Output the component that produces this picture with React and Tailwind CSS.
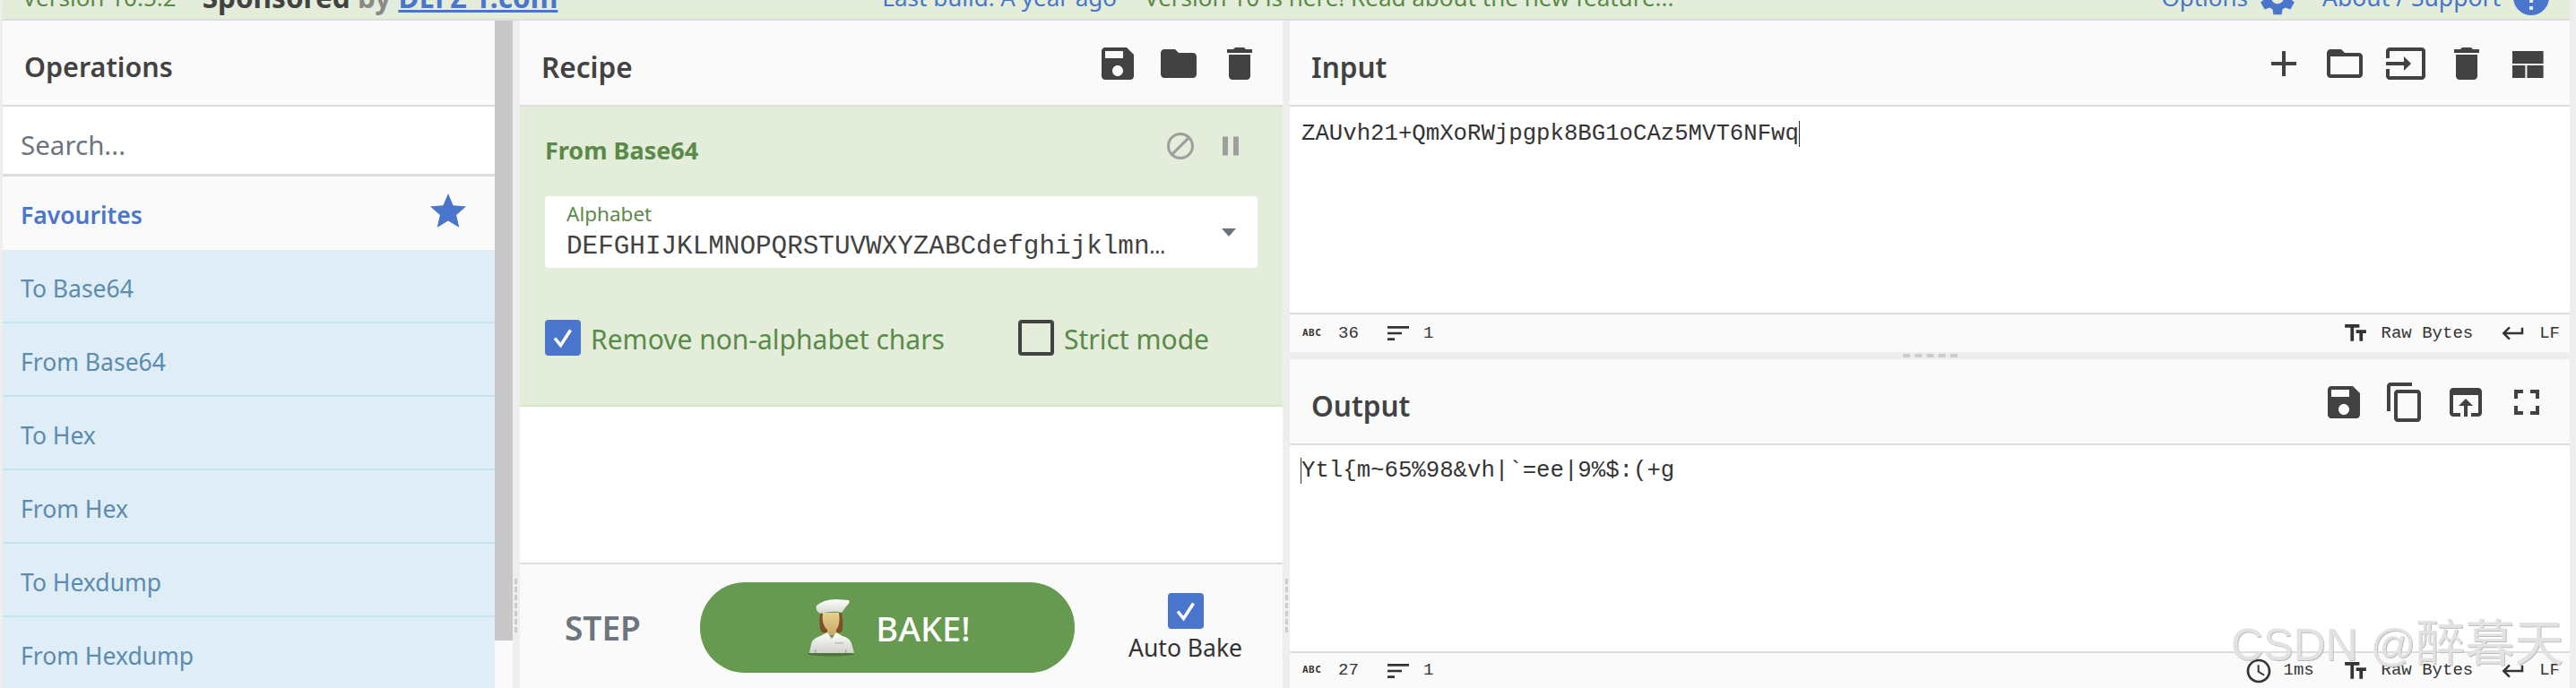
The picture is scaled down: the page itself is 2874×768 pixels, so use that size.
const P = {
  save: "M17 3H5c-1.11 0-2 .9-2 2v14c0 1.1.89 2 2 2h14c1.1 0 2-.9 2-2V7l-4-4zm-5 16c-1.66 0-3-1.34-3-3s1.34-3 3-3 3 1.34 3 3-1.34 3-3 3zm3-10H5V5h10v4z",
  folder: "M10 4H4c-1.1 0-1.99.9-1.99 2L2 18c0 1.1.9 2 2 2h16c1.1 0 2-.9 2-2V8c0-1.1-.9-2-2-2h-8l-2-2z",
  del: "M6 19c0 1.1.9 2 2 2h8c1.1 0 2-.9 2-2V7H6v12zM19 4h-3.5l-1-1h-5l-1 1H5v2h14V4z",
  add: "M19 13h-6v6h-2v-6H5v-2h6V5h2v6h6v2z",
  open: "M20 6h-8l-2-2H4c-1.1 0-1.99.9-1.99 2L2 18c0 1.1.9 2 2 2h16c1.1 0 2-.9 2-2V8c0-1.1-.9-2-2-2zm0 12H4V8h16v10z",
  input: "M21 3.01H3c-1.1 0-2 .9-2 2V9h2V4.99h18v14.03H3V15H1v4.01c0 1.1.9 1.98 2 1.98h18c1.1 0 2-.88 2-1.98v-14c0-1.11-.9-2-2-2zM11 16l4-4-4-4v3H1v2h10v3z",
  layout: "M3.5 5h17.3v7H3.500zM3.500 13h7.200v7H3.500zM11.700 13h9.100v7h-9.100z",
  copy: "M16 1H4c-1.1 0-2 .9-2 2v14h2V3h12V1zm3 4H8c-1.1 0-2 .9-2 2v14c0 1.1.9 2 2 2h11c1.1 0 2-.9 2-2V7c0-1.1-.9-2-2-2zm0 16H8V7h11v14z",
  browser: "M19 4H5c-1.11 0-2 .9-2 2v12c0 1.1.89 2 2 2h4v-2H5V8h14v10h-4v2h4c1.1 0 2-.9 2-2V6c0-1.1-.89-2-2-2zm-7 6l-4 4h3v6h2v-6h3l-4-4z",
  full: "M7 14H5v5h5v-2H7v-3zm-2-4h2V7h3V5H5v5zm12 7h-3v2h5v-5h-2v3zM14 5v2h3v3h2V5h-5z",
  block: "M12 2C6.48 2 2 6.48 2 12s4.48 10 10 10 10-4.48 10-10S17.52 2 12 2zM4 12c0-4.42 3.58-8 8-8 1.85 0 3.55.63 4.9 1.69L5.69 16.9C4.63 15.55 4 13.85 4 12zm8 8c-1.85 0-3.55-.63-4.9-1.69L18.31 7.1C19.37 8.45 20 10.15 20 12c0 4.42-3.58 8-8 8z",
  pause: "M6 19h4V5H6v14zm8-14v14h4V5h-4z",
  star: "M12 17.27L18.18 21l-1.64-6.97L22 9.24l-7.19-.61L12 2 9.19 8.63 2 9.24l5.46 4.73L5.82 21z",
  gear: "M19.14 12.94c.04-.3.06-.61.06-.94 0-.32-.02-.64-.07-.94l2.03-1.58c.18-.14.23-.41.12-.61l-1.92-3.32c-.12-.22-.37-.29-.59-.22l-2.39.96c-.5-.38-1.03-.7-1.62-.94l-.36-2.54c-.04-.24-.24-.41-.48-.41h-3.84c-.24 0-.43.17-.47.41l-.36 2.54c-.59.24-1.13.57-1.62.94l-2.39-.96c-.22-.08-.47 0-.59.22L2.74 8.87c-.12.21-.08.47.12.61l2.03 1.58c-.05.3-.09.63-.09.94s.02.64.07.94l-2.03 1.58c-.18.14-.23.41-.12.61l1.92 3.32c.12.22.37.29.59.22l2.39-.96c.5.38 1.03.7 1.62.94l.36 2.54c.05.24.24.41.48.41h3.84c.24 0 .44-.17.47-.41l.36-2.54c.59-.24 1.13-.56 1.62-.94l2.39.96c.22.08.47 0 .59-.22l1.92-3.32c.12-.22.07-.47-.12-.61l-2.01-1.58zM12 15.6c-1.98 0-3.6-1.62-3.6-3.6s1.62-3.6 3.6-3.6 3.6 1.62 3.6 3.6-1.62 3.6-3.6 3.6z",
  help: "M12 2C6.48 2 2 6.48 2 12s4.48 10 10 10 10-4.48 10-10S17.52 2 12 2zm1 17h-2v-2h2v2zm2.07-7.75l-.9.92C13.45 12.9 13 13.5 13 15h-2v-.5c0-1.1.45-2.1 1.17-2.83l1.24-1.26c.37-.36.59-.86.59-1.41 0-1.1-.9-2-2-2s-2 .9-2 2H8c0-2.21 1.79-4 4-4s4 1.79 4 4c0 .88-.36 1.68-.93 2.25z",
  tt: "M2.5 4v3h5v12h3V7h5V4h-13zm19 5h-9v3h3v7h3v-7h3V9z",
  ret: "M19 7v4H5.83l3.58-3.59L8 6l-6 6 6 6 1.41-1.41L5.83 13H21V7z",
  sort: "M3 18h6v-2H3v2zM3 6v2h18V6H3zm0 7h12v-2H3v2z",
  clock: "M11.99 2C6.47 2 2 6.48 2 12s4.47 10 9.99 10C17.52 22 22 17.52 22 12S17.52 2 11.99 2zM12 20c-4.42 0-8-3.58-8-8s3.58-8 8-8 8 3.58 8 8-3.58 8-8 8zm.5-13H11v6l5.25 3.15.75-1.23-4.5-2.67z",
};

function Icon({ d, className = "" }) {
  return (
    <svg viewBox="0 0 24 24" fill="currentColor" className={"shrink-0 " + className}>
      <path d={d} />
    </svg>
  );
}

function Tool({ d }) {
  return <Icon d={d} className="w-[48px] h-[48px] text-[#424242]" />;
}

function Check({ className = "" }) {
  return (
    <span className={"flex items-center justify-center w-[40px] h-[40px] rounded-[4px] bg-[#4a75cc] shrink-0 " + className}>
      <svg viewBox="0 0 40 40" className="w-[40px] h-[40px]">
        <path d="M11 20.500l6.500 8 11-17" fill="none" stroke="#fff" strokeWidth="3.500" />
      </svg>
    </span>
  );
}

function Chef() {
  return (
    <svg viewBox="0 0 60 67" className="w-[60px] h-[67px] shrink-0">
      <defs>
        <linearGradient id="coat" x1="0" y1="0" x2="0" y2="1">
          <stop offset="0" stopColor="#ffffff" />
          <stop offset="1" stopColor="#cfd1cc" />
        </linearGradient>
        <linearGradient id="face" x1="0" y1="0" x2="0" y2="1">
          <stop offset="0" stopColor="#e8d190" />
          <stop offset="1" stopColor="#c9a868" />
        </linearGradient>
        <linearGradient id="hat" x1="0" y1="0" x2="0" y2="1">
          <stop offset="0" stopColor="#ffffff" />
          <stop offset="1" stopColor="#d4d4cf" />
        </linearGradient>
      </defs>
      <ellipse cx="30" cy="63" rx="26" ry="2.500" fill="#3f6a30" opacity="0.7" />
      <path d="M18 17 Q16 38 21 39 L41 39 Q45 36 42 17 Z" fill="#7d4f22" />
      <path d="M21 17 Q19 30 26 36 L26 42 L36 42 L36 36 Q41 30 39 17 Z" fill="url(#face)" />
      <path d="M26 39 L18 43 Q9 46 8 52 L6 62 L56 62 L53 51 Q51 45 43 43 L36 39 L31 46 Z" fill="url(#coat)" />
      <rect x="34" y="50" width="10" height="1.500" fill="#b9bbb5" />
      <rect x="12" y="58" width="1.500" height="4" fill="#a9aba6" />
      <rect x="46" y="58" width="1.500" height="4" fill="#a9aba6" />
      <path d="M14 9 Q22 2 36 2 L50 3 Q52 6 47 10 L42 17 Q34 14 18 18 Q12 14 14 9 Z" fill="url(#hat)" />
    </svg>
  );
}

function PanelHeader({ title, children, className = "" }) {
  return (
    <div className={"h-[96px] shrink-0 flex items-center justify-between bg-[#fafafa] border-b-2 border-[#ddd] " + className}>
      <span className="text-[31.5px] font-semibold text-[#424242] leading-none mt-[9px] ml-[24px]">{title}</span>
      <div className="flex items-center gap-[20px] mt-[2px]">{children}</div>
    </div>
  );
}

function StatusBar({ chars, time }) {
  return (
    <div className="flex-1 flex items-center justify-between bg-[#fafafa] font-['Liberation_Mono',monospace] text-[19px] text-[#333]">
      <div className="flex items-center ml-[14px]">
        <span className="w-[24px] text-[11px] font-bold tracking-[0.5px] font-['DejaVu_Sans_Mono',monospace]">ABC</span>
        <span className="ml-[16px] w-[23px]">{chars}</span>
        <Icon d={P.sort} className="w-[32px] h-[32px] ml-[28px] -mr-[4px] text-[#333]" />
        <span className="ml-[16px]">1</span>
      </div>
      <div className="flex items-center mr-[11px]">
        {time && <Icon d={P.clock} className="w-[32px] h-[32px] text-[#333] mr-[12px]" />}
        {time && <span className="mr-[29px] w-[36px]">1ms</span>}
        <Icon d={P.tt} className="w-[30px] h-[30px] text-[#333]" />
        <span className="ml-[14px]">Raw Bytes</span>
        <Icon d={P.ret} className="w-[30px] h-[30px] ml-[30px] text-[#333]" />
        <span className="ml-[14px]">LF</span>
      </div>
    </div>
  );
}

const ops = ["To Base64", "From Base64", "To Hex", "From Hex", "To Hexdump", "From Hexdump"];

export default function App() {
  return (
    <div className="relative w-[2874px] h-[768px] overflow-hidden flex flex-col bg-[#eee] font-['Noto_Sans',sans-serif]">
      {/* top banner, cut off by the window */}
      <div className="h-[23px] w-[2865px] ml-[2px] shrink-0 bg-[#e3edd9] border-b-2 border-[#ddd] flex items-end overflow-hidden text-[26px] leading-[28px] pb-[10px]">
        <span className="ml-[23px] text-[#5a8a4a] whitespace-nowrap">Version 10.5.2</span>
        <span className="ml-[29px] text-[31.500px] leading-[28px] font-bold text-[#424242] whitespace-nowrap">
          Sponsored <span className="text-[#8a8a8a]">by</span>{" "}
          <span className="text-[#4a75cc] underline">DEFZ 1.com</span>
        </span>
        <span className="ml-[362px] text-[#4a75cc] whitespace-nowrap">Last build: A year ago</span>
        <span className="ml-[31px] text-[#5a8a4a] whitespace-nowrap">Version 10 is here! Read about the new feature...</span>
        <span className="ml-auto text-[#4a75cc] whitespace-nowrap">Options</span>
        <Icon d={P.gear} className="w-[48px] h-[48px] text-[#4a75cc] ml-[9px] -mb-[10px]" />
        <span className="ml-[26px] text-[26.500px] text-[#4a75cc] whitespace-nowrap">About / Support</span>
        <Icon d={P.help} className="w-[48px] h-[48px] text-[#4a75cc] ml-[10px] mr-[19px] -mb-[10px]" />
      </div>

      <div className="flex-1 flex min-h-0">
        <div className="w-[3px] shrink-0" />

        {/* Operations */}
        <div className="w-[549px] shrink-0 flex flex-col bg-white">
          <div className="h-[96px] shrink-0 flex items-center bg-[#fafafa] border-b-2 border-[#ddd]">
            <span className="ml-[24px] text-[30.500px] font-semibold text-[#424242] leading-none mt-[9px]">Operations</span>
          </div>
          <div className="h-[78px] shrink-0 flex items-center bg-white border-b-[3px] border-[#ddd]">
            <span className="ml-[20px] text-[29.500px] text-[#6c757d] leading-none mt-[10px]">Search...</span>
          </div>
          <div className="h-[82px] shrink-0 flex items-center justify-between bg-[#fafafa]">
            <span className="ml-[20px] text-[26.500px] font-semibold text-[#4a75cc] leading-none mt-[4px]">Favourites</span>
            <Icon d={P.star} className="w-[48px] h-[48px] text-[#4a75cc] mr-[28px] -mt-[4px]" />
          </div>
          {ops.map((o) => (
            <div key={o} className="h-[82px] shrink-0 flex items-center bg-[#dfedf6] border-b-2 border-[#c5e4f0]">
              <span className="ml-[20px] text-[26.500px] text-[#5b8cb0] leading-none mt-[6px]">{o}</span>
            </div>
          ))}
        </div>

        {/* scrollbar */}
        <div className="w-[20px] shrink-0 bg-[#fafafa]">
          <div className="h-[692px] bg-[#c8c8c8]" />
        </div>

        <div className="w-[8px] shrink-0 pt-[623px] pl-[2px]">
          <div className="h-[60px] border-l-[3px] border-dashed border-[#ccc]" />
        </div>

        {/* Recipe */}
        <div className="w-[851px] shrink-0 flex flex-col bg-white">
          <PanelHeader title="Recipe" className="pr-[24px]">
            <Tool d={P.save} />
            <Tool d={P.folder} />
            <Tool d={P.del} />
          </PanelHeader>

          <div className="h-[335px] shrink-0 bg-[#e3edd9] border-b-2 border-[#d6e7c9] pl-[28px] pr-[28px] flex flex-col">
            <div className="h-[100px] shrink-0 flex items-center justify-between">
              <span className="text-[27px] font-bold text-[#5a8a4a] leading-none mb-[4px]">From Base64</span>
              <div className="flex items-center gap-[20px] mr-[12px] mb-[12px]">
                <Icon d={P.block} className="w-[36px] h-[36px] text-[#9e9e9e]" />
                <Icon d={P.pause} className="w-[36px] h-[36px] text-[#9e9e9e]" />
              </div>
            </div>
            <div className="h-[80px] shrink-0 bg-white rounded-[4px] flex items-center justify-between pl-[24px] pr-[24px]">
              <div className="flex flex-col">
                <span className="text-[22.500px] leading-[26px] text-[#5a8a4a]">Alphabet</span>
                <span className="mt-[8px] text-[29.300px] leading-[32px] text-[#424242] font-['Liberation_Mono',monospace] w-[672px] overflow-hidden text-ellipsis whitespace-nowrap">DEFGHIJKLMNOPQRSTUVWXYZABCdefghijklmnopqrstuvwxyz</span>
              </div>
              <span className="w-0 h-0 border-l-[8px] border-r-[8px] border-t-[9px] border-l-transparent border-r-transparent border-t-[#6c757d]" />
            </div>
            <div className="flex items-center mt-[58px]">
              <Check />
              <span className="ml-[11px] text-[30px] text-[#5a8a4a] leading-none w-[477px] mt-[4px]">Remove non-alphabet chars</span>
              <span className="w-[40px] h-[40px] rounded-[4px] border-4 border-[#424242] shrink-0" />
              <span className="ml-[11px] text-[30px] text-[#5a8a4a] leading-none mt-[4px]">Strict mode</span>
            </div>
          </div>

          <div className="flex-1" />

          <div className="h-[140px] shrink-0 bg-[#fafafa] border-t-2 border-[#ddd] flex items-center">
            <span className="ml-[50px] text-[37px] font-semibold text-[#6c757d] leading-none w-[151px] mt-[3px]">STEP</span>
            <div className="w-[418px] h-[101px] rounded-[50px] bg-[#659a50] flex items-center justify-center mt-[3px]">
              <Chef />
              <span className="ml-[20px] text-[38px] font-medium text-white leading-none">BAKE!</span>
            </div>
            <div className="ml-[60px] flex flex-col items-center">
              <Check />
              <span className="mt-[8px] text-[26.500px] text-[#333] leading-none">Auto Bake</span>
            </div>
          </div>
        </div>

        <div className="w-[8px] shrink-0 pt-[623px] pl-[3px]">
          <div className="h-[60px] border-l-[3px] border-dashed border-[#ccc]" />
        </div>

        {/* Input + Output */}
        <div className="w-[1428px] shrink-0 flex flex-col">
          <PanelHeader title="Input" className="pr-[23px]">
            <Tool d={P.add} />
            <Tool d={P.open} />
            <Tool d={P.input} />
            <Tool d={P.del} />
            <Tool d={P.layout} />
          </PanelHeader>
          <div className="h-[230px] shrink-0 bg-white px-[13px] pt-[15px]">
            <span className="text-[25.700px] leading-[32px] text-[#333] font-['Liberation_Mono',monospace] border-r border-[#333]">ZAUvh21+QmXoRWjpgpk8BG1oCAz5MVT6NFwq</span>
          </div>
          <div className="h-[44px] shrink-0 flex flex-col border-t-2 border-[#ddd]">
            <StatusBar chars="36" />
          </div>
          <div className="h-[8px] shrink-0 flex justify-center items-start pt-[2px]">
            <div className="w-[61px] h-0 border-t-[4px] border-dashed border-[#ccc]" />
          </div>
          <PanelHeader title="Output" className="pr-[24px]">
            <Tool d={P.save} />
            <Tool d={P.copy} />
            <Tool d={P.browser} />
            <Tool d={P.full} />
          </PanelHeader>
          <div className="h-[230px] shrink-0 bg-white px-[12px] pt-[13px]">
            <span className="text-[25.700px] leading-[32px] text-[#333] font-['Liberation_Mono',monospace] border-l border-[#333]">Ytl{"{"}m~65%98&amp;vh|`=ee|9%$:(+g</span>
          </div>
          <div className="flex-1 flex flex-col border-t-2 border-[#ddd]">
            <StatusBar chars="27" time />
          </div>
        </div>
        <div className="w-[7px] shrink-0" />
      </div>

      {/* image watermark */}
      <div className="absolute left-[2489px] top-[688px] text-[50px] leading-[60px] whitespace-nowrap text-[#e2e2e2] [text-shadow:1px_1px_0_#bdbdbd] font-['Liberation_Sans','Noto_Sans_CJK_SC',sans-serif]">CSDN @<span className="text-[55px]">醉暮天</span></div>
    </div>
  );
}
